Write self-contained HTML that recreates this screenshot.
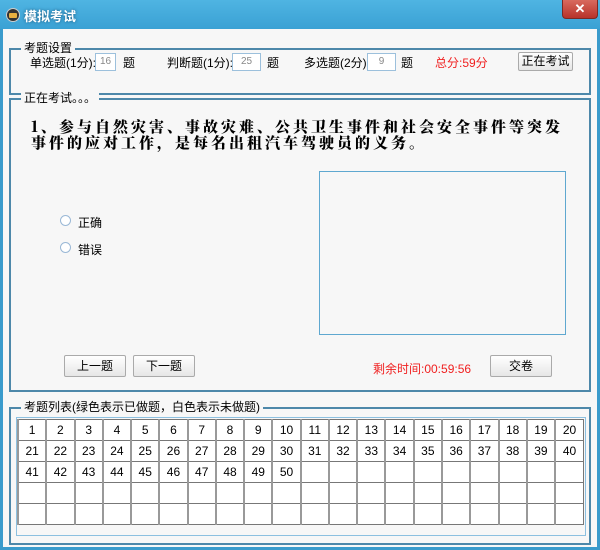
<!DOCTYPE html>
<html><head><meta charset="utf-8"><style>
body{margin:0;width:600px;height:550px;overflow:hidden;font-family:"Liberation Sans","Noto Sans CJK SC",sans-serif;font-size:12px;color:#000}
.win{position:absolute;left:0;top:0;width:600px;height:550px;background:#3a9bcc}
.title{position:absolute;left:0;top:0;width:600px;height:29px;background:linear-gradient(#4fb4e2,#3aa1d4)}
.title span{position:absolute;left:24px;top:6px;color:#fff;font-weight:bold;font-size:13px;text-shadow:0 0 3px #1a5a80}
.icon{position:absolute;left:6px;top:8px;width:12px;height:12px;border-radius:50%;background:#333;border:1px solid #ccc}
.icon:after{content:"";position:absolute;left:2px;top:4px;width:8px;height:5px;background:#e8b040;border-radius:1px}
.close{position:absolute;left:562px;top:0;width:34px;height:18px;background:linear-gradient(#d86a5e,#b8322a);border:1px solid #7a2a25;border-top:none;border-radius:0 0 4px 4px;color:#fff;font-weight:bold;text-align:center;font-size:13px;line-height:17px}
.client{position:absolute;left:3px;top:29px;width:594px;height:518px;background:#f7f7f7}
.grp{position:absolute;border:2px solid #4d88aa;box-sizing:border-box}
.lg{position:absolute;left:10px;top:-9px;background:#f7f7f7;padding:0 3px;line-height:14px;white-space:nowrap}
.t{position:absolute;white-space:nowrap}
.in{position:absolute;height:16px;border:1px solid #9cc0dc;background:#fff;color:#888;font-size:10px;text-align:center;line-height:16px}
.btn{position:absolute;height:20px;border:1px solid #aaa;border-radius:2px;background:linear-gradient(#fff,#e6e6e6);text-align:center;line-height:20px}
.radio{position:absolute;width:9px;height:9px;border:1px solid #9ab8d6;border-radius:50%;background:#fff}
table{position:absolute;border-collapse:collapse;left:14px;top:390px;width:567px;table-layout:fixed}
td{height:20px;border:1px solid #777;border-left:2px solid #999;background:#fff;text-align:center;padding:0;font-size:12px;overflow:hidden}
</style></head><body>
<div class="win">
<div class="title"><div class="icon"></div><span>模拟考试</span></div>
<div class="close">✕</div>
<div class="client">
<div class="grp" style="left:6px;top:19px;width:582px;height:47px"><div class="lg">考题设置</div></div>
<div class="t" style="left:27px;top:25px">单选题(1分):</div><div class="in" style="left:92px;top:24px;width:19px">16</div><div class="t" style="left:120px;top:25px">题</div>
<div class="t" style="left:164px;top:25px">判断题(1分):</div><div class="in" style="left:229px;top:24px;width:27px">25</div><div class="t" style="left:264px;top:25px">题</div>
<div class="t" style="left:301px;top:25px">多选题(2分):</div><div class="in" style="left:364px;top:24px;width:27px">9</div><div class="t" style="left:398px;top:25px">题</div>
<div class="t" style="left:432px;top:25px;color:#f02020">总分:59分</div>
<div class="btn" style="left:515px;top:23px;width:53px;height:17px;line-height:17px">正在考试</div>
<div class="grp" style="left:6px;top:69px;width:582px;height:294px"><div class="lg">正在考试。。。</div></div>
<div class="t" style="left:28px;top:90px;font-family:'Noto Serif CJK SC',serif;font-weight:900;font-size:15px;letter-spacing:3px;line-height:16px">1、参与自然灾害、事故灾难、公共卫生事件和社会安全事件等突发<br>事件的应对工作，是每名出租汽车驾驶员的义务。</div>
<div style="position:absolute;left:316px;top:142px;width:245px;height:162px;border:1px solid #5fa8d0;background:#f7f7f7"></div>
<div class="radio" style="left:57px;top:186px"></div><div class="t" style="left:75px;top:185px">正确</div>
<div class="radio" style="left:57px;top:213px"></div><div class="t" style="left:75px;top:212px">错误</div>
<div class="btn" style="left:61px;top:326px;width:60px">上一题</div>
<div class="btn" style="left:130px;top:326px;width:60px">下一题</div>
<div class="t" style="left:370px;top:331px;color:#f02020">剩余时间:00:59:56</div>
<div class="btn" style="left:487px;top:326px;width:60px">交卷</div>
<div class="grp" style="left:6px;top:378px;width:582px;height:138px"><div class="lg">考题列表(绿色表示已做题，白色表示未做题)</div></div>
<div style="position:absolute;left:13px;top:388px;width:568px;height:117px;border:1px solid #8cc0e0;background:#f7f7f7"></div>
<table>
<tr><td>1</td><td>2</td><td>3</td><td>4</td><td>5</td><td>6</td><td>7</td><td>8</td><td>9</td><td>10</td><td>11</td><td>12</td><td>13</td><td>14</td><td>15</td><td>16</td><td>17</td><td>18</td><td>19</td><td>20</td></tr>
<tr><td>21</td><td>22</td><td>23</td><td>24</td><td>25</td><td>26</td><td>27</td><td>28</td><td>29</td><td>30</td><td>31</td><td>32</td><td>33</td><td>34</td><td>35</td><td>36</td><td>37</td><td>38</td><td>39</td><td>40</td></tr>
<tr><td>41</td><td>42</td><td>43</td><td>44</td><td>45</td><td>46</td><td>47</td><td>48</td><td>49</td><td>50</td><td></td><td></td><td></td><td></td><td></td><td></td><td></td><td></td><td></td><td></td></tr>
<tr><td></td><td></td><td></td><td></td><td></td><td></td><td></td><td></td><td></td><td></td><td></td><td></td><td></td><td></td><td></td><td></td><td></td><td></td><td></td><td></td></tr>
<tr><td></td><td></td><td></td><td></td><td></td><td></td><td></td><td></td><td></td><td></td><td></td><td></td><td></td><td></td><td></td><td></td><td></td><td></td><td></td><td></td></tr>
</table>
</div></div>
</body></html>
